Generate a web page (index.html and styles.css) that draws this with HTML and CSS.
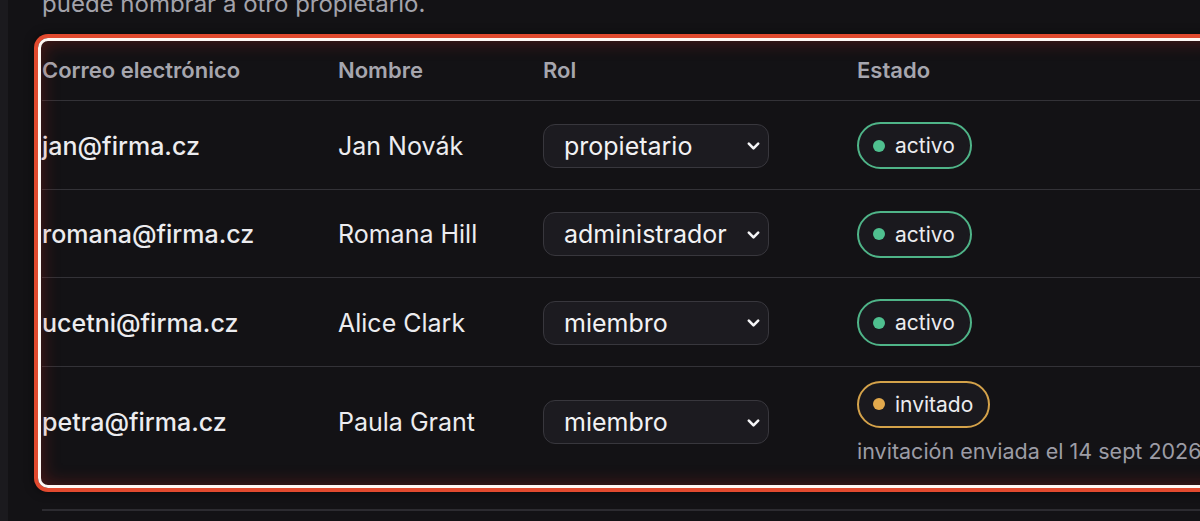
FILE: index.html
```html
<!DOCTYPE html>
<html>

<head>
    <title>Miembros</title>
    <link rel="stylesheet" href="styles.css">
</head>

<body>
    <div class="page">
        <div class="side-edge"></div>

        <!-- contenido principal -->
        <div class="main">
            <p class="hint">puede nombrar a otro propietario.</p>

            <div class="table-wrap">
                <table class="members">
                    <thead>
                        <tr>
                            <th class="col-email">Correo electrónico</th>
                            <th class="col-name">Nombre</th>
                            <th class="col-role">Rol</th>
                            <th>Estado</th>
                        </tr>
                    </thead>
                    <tbody>
                        <tr>
                            <td class="email">jan@firma.cz</td>
                            <td>Jan Novák</td>
                            <td>
                                <div class="select">
                                    <span>propietario</span>
                                    <svg class="chevron" viewBox="0 0 16 16" width="15" height="15"><path d="M3 6l5 5 5-5" fill="none" stroke="currentColor" stroke-width="2.8" stroke-linecap="round" stroke-linejoin="round"/></svg>
                                </div>
                            </td>
                            <td><span class="badge active"><i class="dot"></i>activo</span></td>
                        </tr>
                        <tr>
                            <td class="email">romana@firma.cz</td>
                            <td>Romana Hill</td>
                            <td>
                                <div class="select">
                                    <span>administrador</span>
                                    <svg class="chevron" viewBox="0 0 16 16" width="15" height="15"><path d="M3 6l5 5 5-5" fill="none" stroke="currentColor" stroke-width="2.8" stroke-linecap="round" stroke-linejoin="round"/></svg>
                                </div>
                            </td>
                            <td><span class="badge active"><i class="dot"></i>activo</span></td>
                        </tr>
                        <tr>
                            <td class="email">ucetni@firma.cz</td>
                            <td>Alice Clark</td>
                            <td>
                                <div class="select">
                                    <span>miembro</span>
                                    <svg class="chevron" viewBox="0 0 16 16" width="15" height="15"><path d="M3 6l5 5 5-5" fill="none" stroke="currentColor" stroke-width="2.8" stroke-linecap="round" stroke-linejoin="round"/></svg>
                                </div>
                            </td>
                            <td><span class="badge active"><i class="dot"></i>activo</span></td>
                        </tr>
                        <tr class="last">
                            <td class="email">petra@firma.cz</td>
                            <td>Paula Grant</td>
                            <td>
                                <div class="select">
                                    <span>miembro</span>
                                    <svg class="chevron" viewBox="0 0 16 16" width="15" height="15"><path d="M3 6l5 5 5-5" fill="none" stroke="currentColor" stroke-width="2.8" stroke-linecap="round" stroke-linejoin="round"/></svg>
                                </div>
                            </td>
                            <td>
                                <span class="badge invited"><i class="dot"></i>invitado</span>
                                <div class="note">invitación enviada el 14 sept 2026</div>
                            </td>
                        </tr>
                    </tbody>
                </table>
                <!-- marco resaltado encima de la tabla -->
                <div class="highlight"></div>
            </div>

            <div class="separator"></div>
        </div>
    </div>
</body>

</html>
```

FILE: styles.css
```css
/* base */
body {
    margin: 0;
    background-color: #131215;
    color: #ececef;
    font-family: Inter, "Noto Sans", sans-serif;
}

.page {
    display: flex;
    width: 1200px;
    height: 521px;
    overflow: hidden;
}

.side-edge {
    width: 8px;
    flex-shrink: 0;
    background-color: #1b1a1e;
}

.main {
    flex: 1;
    padding-left: 34px;
    min-width: 0;
}

/* texto de ayuda arriba */
.hint {
    margin: -11px 0 24px;
    font-size: 24px;
    line-height: 30px;
    color: #a3a3ab;
    white-space: nowrap;
}

/* tabla */
.table-wrap {
    position: relative;
    width: 1250px;
}

.members {
    width: 100%;
    border-collapse: collapse;
    font-size: 25px;
}

.members th {
    text-align: left;
    font-size: 22px;
    font-weight: 600;
    color: #a6a6ae;
    height: 53px;
    padding: 0 0 4px;
    border-bottom: 1px solid #333237;
}

.col-email { width: 296px; }
.col-name { width: 205px; }
.col-role { width: 314px; }

.members td {
    padding: 21px 0 19.5px;
    border-bottom: 1px solid #333237;
    vertical-align: middle;
}

.members tr.last td {
    padding: 14px 0 20px;
    border-bottom: none;
}

.email {
    font-weight: 500;
}

/* selector de rol */
.select {
    display: flex;
    align-items: center;
    justify-content: space-between;
    width: 226px;
    height: 44px;
    box-sizing: border-box;
    padding: 0 7px 0 20px;
    background-color: #1c1b20;
    border: 1px solid #38373d;
    border-radius: 12px;
    color: #f2f2f4;
}

.chevron {
    color: #f4f4f6;
}

/* insignias de estado */
.badge {
    display: inline-flex;
    align-items: center;
    gap: 10px;
    height: 47px;
    box-sizing: border-box;
    padding: 0 15px 0 14px;
    border-radius: 24px;
    border: 2px solid;
    background-color: #1a191e;
    font-size: 21px;
}

.badge .dot {
    width: 12px;
    height: 12px;
    border-radius: 50%;
}

.badge.active {
    border-color: #4fb488;
}

.badge.active .dot {
    background-color: #4fc08f;
}

.badge.invited {
    border-color: #d4a24a;
}

.badge.invited .dot {
    background-color: #e2a94c;
}

.note {
    margin-top: 10px;
    font-size: 21.5px;
    line-height: 26px;
    color: #9c9ca5;
    white-space: nowrap;
}

/* marco resaltado */
.highlight {
    position: absolute;
    top: -5px;
    left: -4px;
    right: 0;
    bottom: -4px;
    border: 3px solid #fff8f4;
    border-radius: 10px;
    box-shadow: 0 0 0 4px #e24a2f, 0 0 10px 4px rgba(0, 0, 0, 0.5), inset 0 0 18px rgba(200, 40, 30, 0.35);
    pointer-events: none;
}

.separator {
    margin-top: 25px;
    height: 2px;
    background-color: #2c2b30;
}
```
